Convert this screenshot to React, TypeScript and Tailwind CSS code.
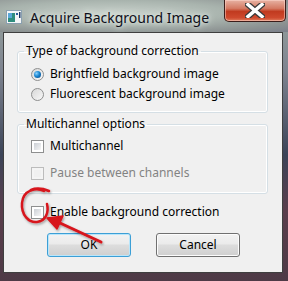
const ui = { fontFamily: '"Segoe UI", "Noto Sans", "DejaVu Sans", sans-serif' }

function Radio({ checked, label }: { checked?: boolean; label: string }) {
    return (
        <div className="flex items-center h-[20px]">
            <span className="relative w-[13px] h-[13px] rounded-full border border-[#8e8f8f] bg-gradient-to-br from-[#d8d8d8] to-[#f8f8f8] flex items-center justify-center">
                {checked && (
                    <span className="w-[7px] h-[7px] rounded-full bg-[radial-gradient(circle_at_35%_35%,#8ad2ff,#1a86d0_45%,#0b3f7a)]" />
                )}
            </span>
            <span className="ml-[6px] text-[12px] text-black">{label}</span>
        </div>
    )
}

function Check({ label, disabled }: { label: string; disabled?: boolean }) {
    return (
        <div className="flex items-center h-[20px]">
            <span className={"w-[13px] h-[13px] border p-[2px] " + (disabled ? "border-[#bcbcbc] bg-[#f4f4f4]" : "border-[#8e8f8f] bg-white")}>
                <span className={"block w-full h-full " + (disabled ? "bg-[#f0f0f0]" : "bg-gradient-to-br from-[#cbcfd5] to-[#f6f6f6]")} />
            </span>
            <span className={"ml-[6px] text-[12px] " + (disabled ? "text-[#838383]" : "text-black")}>{label}</span>
        </div>
    )
}

export default function App() {
    return (
        <div className="relative w-[288px] h-[281px] overflow-hidden bg-[linear-gradient(180deg,#9aa6a0_0%,#7e8490_25%,#3c4458_55%,#5a3e4c_75%,#4e3a46_100%)]" style={ui}>
            {/* title bar */}
            <div className="relative h-[32px] bg-[radial-gradient(ellipse_at_40%_40%,#c7d0ca_0%,#a9b4ae_45%,#8b9191_80%,#7b7f8b_100%)]">
                <svg width="16" height="14" viewBox="0 0 16 14" className="absolute left-[6px] top-[10px]">
                    <rect x="0.5" y="0.5" width="15" height="13" fill="#f4f6f8" stroke="#8aa0b0" />
                    <rect x="2" y="3" width="7" height="9" fill="#2f8e7e" />
                    <rect x="2" y="3" width="4" height="5" fill="#58a8d8" />
                    <rect x="10" y="3" width="2" height="2" fill="#2a5c9a" />
                    <rect x="13" y="2" width="1.5" height="6" fill="#1d3b66" />
                </svg>
                <span className="absolute left-[30px] top-[7px] text-[14px] text-[#0f0f1a] [text-shadow:0_0_8px_#e8efe9,0_0_4px_#e8efe9]">
                    Acquire Background Image
                </span>
                <div className="absolute left-[224px] top-0 w-[62px] h-[22px] rounded-b-[5px] border border-t-0 border-[#3b1d1a] bg-[linear-gradient(180deg,#e7b2a3_0%,#d47a63_40%,#c13a1f_55%,#cf4a2e_85%,#e08060_100%)] shadow-[inset_0_0_0_1px_rgba(255,220,210,0.5)] flex items-center justify-center">
                    <svg width="20" height="15" viewBox="0 0 20 15">
                        <path d="M3 1.5 L17 13.5 M17 1.5 L3 13.5" stroke="#3a3a3a" strokeWidth="6" strokeLinecap="square" />
                        <path d="M3 1.5 L17 13.5 M17 1.5 L3 13.5" stroke="#ffffff" strokeWidth="3.5" strokeLinecap="square" />
                    </svg>
                </div>
            </div>

            {/* client area */}
            <div className="ml-[3px] w-[280px] h-[241px] border border-[#3f3f3f] bg-[#f0f0f0] pl-[13px] pr-[14px] pt-[10px]">
                <fieldset className="border border-[#d5dfe5] rounded-[3px] shadow-[inset_0_0_0_1px_#ffffff] pl-[13px] pt-[5px] pb-[8px]">
                    <legend className="-ml-[7px] px-[2px] text-[12px] text-black leading-[16px]">Type of background correction</legend>
                    <Radio checked label="Brightfield background image" />
                    <Radio label="Fluorescent background image" />
                </fieldset>
                <fieldset className="mt-[3px] border border-[#d5dfe5] rounded-[3px] shadow-[inset_0_0_0_1px_#ffffff] pl-[13px] pt-[4px] pb-[10px]">
                    <legend className="-ml-[7px] px-[2px] text-[12px] text-black leading-[16px]">Multichannel options</legend>
                    <Check label="Multichannel" />
                    <div className="h-[7px]" />
                    <Check label="Pause between channels" disabled />
                </fieldset>
                <div className="pl-[14px] mt-[8px]">
                    <Check label="Enable background correction" />
                </div>
                <div className="flex gap-[25px] pl-[30px] mt-[11px]">
                    <button className="w-[84px] h-[24px] rounded-[3px] border border-[#3c9fd6] shadow-[inset_0_0_0_1px_#b9e6fb] bg-[linear-gradient(180deg,#f2f2f2_0%,#ebebeb_45%,#dddddd_50%,#cfcfcf_100%)] text-[12px] text-black">
                        OK
                    </button>
                    <button className="w-[84px] h-[24px] rounded-[3px] border border-[#707070] shadow-[inset_0_0_0_1px_#fcfcfc] bg-[linear-gradient(180deg,#f2f2f2_0%,#ebebeb_45%,#dddddd_50%,#cfcfcf_100%)] text-[12px] text-black">
                        Cancel
                    </button>
                </div>
            </div>

            {/* annotation */}
            <svg width="288" height="281" className="absolute left-0 top-0 pointer-events-none">
                <defs>
                    <filter id="sh" x="-20%" y="-20%" width="140%" height="140%">
                        <feDropShadow dx="1" dy="1.5" stdDeviation="1.2" floodColor="#000" floodOpacity="0.35" />
                    </filter>
                </defs>
                <g filter="url(#sh)" fill="none" stroke="#d7141c" strokeWidth="2.5" strokeLinecap="round">
                    <path d="M44 191 C36 187 23 190 22 203 C21 215 29 223 37 222 C46 221 49 212 47 204" />
                    <path d="M31 190 C38 187 44 189 49 191" />
                    <path d="M101 242 L60 223" strokeWidth="3" />
                    <path d="M47 218 L63 216 L57 229 Z" fill="#d7141c" strokeWidth="1.5" strokeLinejoin="round" />
                </g>
            </svg>
        </div>
    )
}
